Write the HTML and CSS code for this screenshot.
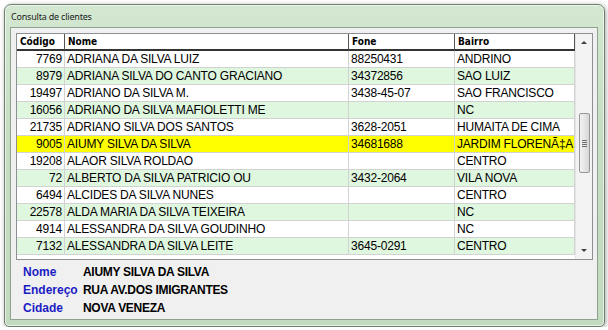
FILE: index.html
```html
<!DOCTYPE html>
<html>
<head>
  <meta charset="utf-8">
  <title>Consulta de clientes</title>
  <link rel="stylesheet" href="styles.css">
</head>
<body>
<div class="window">
  <div class="title">Consulta de clientes</div>
  <div class="client">
    <div class="grid">
      <div class="cols">
        <div class="row header">
          <div class="cell">Código</div>
          <div class="cell">Nome</div>
          <div class="cell">Fone</div>
          <div class="cell">Bairro</div>
        </div>
        <div id="grid-body"></div>
      </div>
      <div class="scrollbar">
        <div class="arrow"><span class="tri up"></span></div>
        <div class="track">
          <div class="thumb"><span class="grip"></span></div>
        </div>
        <div class="arrow"><span class="tri down"></span></div>
      </div>
    </div>
    <div class="info">
      <div class="info-line"><span class="label">Nome</span><span class="value" id="info-nome"></span></div>
      <div class="info-line"><span class="label">Endereço</span><span class="value" id="info-end"></span></div>
      <div class="info-line"><span class="label">Cidade</span><span class="value" id="info-cidade"></span></div>
    </div>
  </div>
</div>

<script>
  const clientes = [
    { cod: 7769, nome: "ADRIANA DA SILVA LUIZ", fone: "88250431", bairro: "ANDRINO" },
    { cod: 8979, nome: "ADRIANA SILVA DO CANTO GRACIANO", fone: "34372856", bairro: "SAO LUIZ" },
    { cod: 19497, nome: "ADRIANO DA SILVA M.", fone: "3438-45-07", bairro: "SAO FRANCISCO" },
    { cod: 16056, nome: "ADRIANO DA SILVA MAFIOLETTI ME", fone: "", bairro: "NC" },
    { cod: 21735, nome: "ADRIANO SILVA DOS SANTOS", fone: "3628-2051", bairro: "HUMAITA DE CIMA" },
    { cod: 9005, nome: "AIUMY SILVA DA SILVA", fone: "34681688", bairro: "JARDIM FLORENÃ‡A",
      endereco: "RUA AV.DOS IMIGRANTES", cidade: "NOVA VENEZA" },
    { cod: 19208, nome: "ALAOR SILVA ROLDAO", fone: "", bairro: "CENTRO" },
    { cod: 72, nome: "ALBERTO DA SILVA PATRICIO OU", fone: "3432-2064", bairro: "VILA NOVA" },
    { cod: 6494, nome: "ALCIDES DA SILVA NUNES", fone: "", bairro: "CENTRO" },
    { cod: 22578, nome: "ALDA MARIA DA SILVA TEIXEIRA", fone: "", bairro: "NC" },
    { cod: 4914, nome: "ALESSANDRA DA SILVA GOUDINHO", fone: "", bairro: "NC" },
    { cod: 7132, nome: "ALESSANDRA DA SILVA LEITE", fone: "3645-0291", bairro: "CENTRO" }
  ];
  const selected = 5;

  function buildGrid() {
    const body = document.getElementById("grid-body");
    body.innerHTML = "";

    for (let i = 0; i < clientes.length; i++) {
      const c = clientes[i];
      const row = document.createElement("div");
      row.className = "row";
      if (i === selected) {
        row.classList.add("selected");
      } else if (i % 2 === 1) {
        row.classList.add("alt");
      }
      const values = [c.cod, c.nome, c.fone, c.bairro];
      for (let v of values) {
        const cell = document.createElement("div");
        cell.className = "cell";
        cell.textContent = v;
        row.appendChild(cell);
      }
      body.appendChild(row);
    }

    const sel = clientes[selected];
    document.getElementById("info-nome").textContent = sel.nome;
    document.getElementById("info-end").textContent = sel.endereco;
    document.getElementById("info-cidade").textContent = sel.cidade;
  }

  buildGrid();
</script>
</body>
</html>
```

FILE: styles.css
```css
body {
  margin: 0;
  background: #ffffff;
  font-family: "Liberation Sans", Arial, sans-serif;
}

.window {
  box-sizing: border-box;
  width: 601px;
  height: 323px;
  margin: 4px 0 0 4px;
  padding: 0 6px 6px 5px;
  display: flex;
  flex-direction: column;
  border: 1px solid #6f806f;
  border-radius: 7px 7px 5px 5px;
  background: linear-gradient(180deg, #d3e7d1 0%, #c6ddc4 40%, #c2dac0 100%);
  box-shadow: 1px 1px 5px rgba(0, 0, 0, 0.35), inset 0 0 0 1px rgba(255, 255, 255, 0.6);
}

.title {
  height: 22px;
  line-height: 24px;
  padding-left: 1px;
  font-family: "Noto Sans", sans-serif;
  font-size: 9px;
  letter-spacing: -0.2px;
  color: #1a1a1a;
}

.client {
  flex: 1;
  border: 1px solid #8ea38e;
  background: #f0f0f0;
  padding: 5px 4px 0 5px;
}

/* grid */
.grid {
  box-sizing: border-box;
  height: 227px;
  display: flex;
  border: 1px solid #8c8f94;
  background: #ffffff;
}

.cols {
  width: 558px;
}

.row {
  display: grid;
  grid-template-columns: 48px 284px 106px 120px;
  height: 17px;
  font-size: 12px;
  letter-spacing: -0.2px;
  color: #000000;
}

.row .cell {
  box-sizing: border-box;
  height: 17px;
  line-height: 16px;
  padding: 0 2px;
  white-space: nowrap;
  overflow: hidden;
  border-right: 1px solid #d2d2d2;
  border-bottom: 1px solid #d2d2d2;
}

.row .cell:first-child {
  text-align: right;
}

.row.alt {
  background: #dff6df;
}

.row.selected {
  background: #ffff00;
}

.row.header {
  font-family: "DejaVu Sans Condensed", "Liberation Sans", sans-serif;
  font-weight: bold;
  font-size: 10px;
  letter-spacing: 0;
}

.row.header .cell {
  text-align: left;
  padding-left: 3px;
  line-height: 15px;
  border-right: 1px solid #555555;
  border-bottom: 2px solid #333333;
}

/* scrollbar */
.scrollbar {
  flex: 1;
  display: flex;
  flex-direction: column;
  background: #f3f3f3;
  border-left: 1px solid #e4e4e4;
}

.arrow {
  height: 17px;
  display: flex;
  align-items: center;
  justify-content: center;
}

.tri {
  width: 0;
  height: 0;
  border-left: 3px solid transparent;
  border-right: 3px solid transparent;
}

.tri.up {
  border-bottom: 3px solid #404040;
}

.tri.down {
  border-top: 3px solid #404040;
}

.track {
  flex: 1;
}

.thumb {
  box-sizing: border-box;
  height: 60px;
  margin: 62px 2px 0 3px;
  border: 1px solid #979797;
  border-radius: 2px;
  background: linear-gradient(90deg, #f2f2f2 0%, #e6e6e6 50%, #d6d6d6 100%);
  display: flex;
  align-items: center;
  justify-content: center;
}

.grip {
  width: 5px;
  height: 7px;
  background: repeating-linear-gradient(180deg, #6e6e6e 0, #6e6e6e 1px, transparent 1px, transparent 2px);
}

/* selected client info */
.info {
  margin-top: 3px;
  padding-left: 7px;
}

.info-line {
  display: flex;
  height: 18px;
  line-height: 18px;
  font-size: 12px;
  font-weight: bold;
}

.label {
  width: 60px;
  color: #1c1cc4;
}

.value {
  color: #000000;
  letter-spacing: -0.3px;
}
```
